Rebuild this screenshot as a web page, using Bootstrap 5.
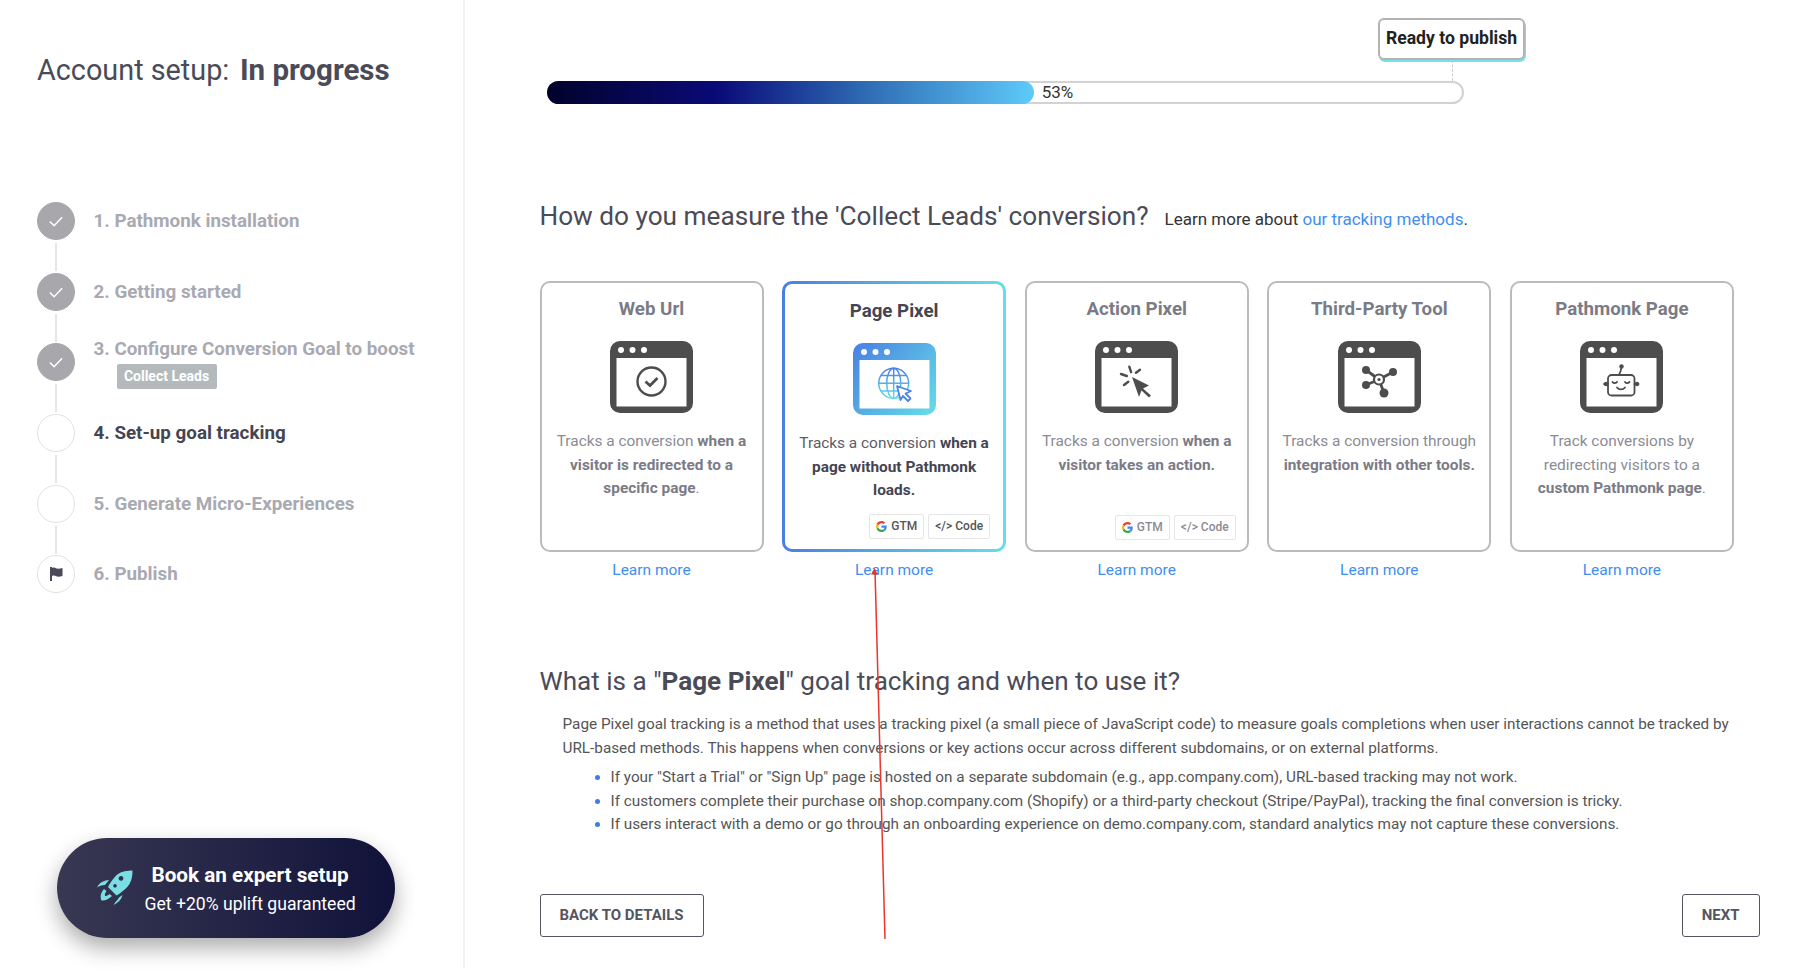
<!DOCTYPE html>
<html lang="en">
<head>
  <meta charset="UTF-8">
  <meta name="viewport" content="width=device-width, initial-scale=1.0">
  <title>Account setup</title>
  <link href="https://cdn.jsdelivr.net/npm/bootstrap@5.3.0/dist/css/bootstrap.min.css" rel="stylesheet">
  <style>
    body {
      font-family: Roboto, "Liberation Sans", sans-serif;
      background: #fff;
      color: #4b4b58;
      position: relative;
      height: 978px;
      overflow: hidden;
    }
    .side-panel {
      width: 465px;
      height: 968px;
      border-right: 2px solid #f2f2f2;
      padding: 51px 0 30px 37px;
    }
    .setup-title {
      font-size: 28.8px;
      line-height: 38px;
      font-weight: 400;
      margin: 0 0 113px;
      color: #4b4b58;
    }
    .setup-title b { font-weight: 700; font-size: 29.5px; margin-left: 3.5px; }
    .step-row { height: 38px; margin-bottom: 32.7px; position: relative; }
    .step-row:not(:last-child)::after {
      content: "";
      position: absolute;
      left: 18px;
      top: 41px;
      width: 2px;
      height: 28px;
      background: #e6e6e6;
    }
    .step-dot {
      width: 38px;
      height: 38px;
      flex: none;
      border-radius: 50%;
      border: 1px solid #e2e2e2;
      background: #fff;
    }
    .step-dot.is-done { background: #a7a7ac; border-color: #a7a7ac; }
    .step-label {
      margin-left: 18.5px;
      font-size: 18.8px;
      font-weight: 700;
      line-height: 22px;
      color: #a9a9b2;
      white-space: nowrap;
    }
    .step-label.is-tall { margin-top: -5px; }
    .step-label.is-current { color: #454552; }
    .goal-tag {
      display: block;
      width: 100px;
      margin: 4px 0 0 23px;
      background: #b4babb;
      color: #fff;
      font-size: 14px;
      line-height: 25px;
      border-radius: 2px;
      text-align: center;
    }
    .expert-btn {
      width: 338px;
      height: 100px;
      margin: 0 0 0 20px;
      border-radius: 50px;
      background: linear-gradient(90deg, #383853, #11123a);
      box-shadow: 0 10px 22px rgba(0, 0, 0, .33);
      color: #fff;
      padding-left: 40px;
    }
    .expert-btn strong { display: block; font-size: 20.7px; line-height: 26px; font-weight: 700; }
    .expert-btn span { display: block; font-size: 17.6px; line-height: 26px; margin-top: 3px; }
    .expert-copy { margin-left: 11.5px; padding-top: 3px; }

    .main-panel { padding: 18px 0 0 74.5px; width: 1355px; }
    .progress-wrap { width: 978px; margin-left: 7.5px; }
    .publish-tip {
      width: 147px;
      height: 42px;
      border: 2px solid #b3b3b3;
      border-radius: 6px;
      box-shadow: 1px 2px 0 #74e3ee;
      font-size: 17.6px;
      font-weight: 700;
      line-height: 37px;
      text-align: center;
      color: #222;
      background: #fff;
      white-space: nowrap;
    }
    .tip-line { height: 21px; margin-left: 905px; border-left: 1px dashed #ccc; }
    .bar-track {
      width: 917px;
      height: 23px;
      border: 2px solid #d2d2d2;
      border-radius: 12px;
    }
    .bar-fill {
      height: 23px;
      margin: -2px 0 0 -2px;
      border-radius: 12px;
      background: linear-gradient(90deg, #02022c 0, #0a0a78 35%, #2f6db5 66%, #5ecafa 100%);
    }
    .bar-text { font-size: 17px; color: #333; line-height: 19px; margin: -2px 0 0 8px; }

    .question-head { margin: 96px 0 0; height: 32px; }
    .question-head h2 { font-size: 26.2px; line-height: 32px; font-weight: 400; margin: 0; }
    .question-head p { font-size: 17px; margin: 0 0 0 16px; color: #333; }
    .blue-link { color: #3f8ef0; text-decoration: none; }

    .method-grid {
      display: grid;
      grid-template-columns: repeat(5, 224px);
      column-gap: 18.6px;
      margin-top: 49px;
    }
    .method-card {
      height: 271px;
      border: 2px solid #bbb;
      border-radius: 10px;
      padding: 15px 11px 10px;
      text-align: center;
      color: #8b8b94;
      background: #fff;
    }
    .method-card.is-active {
      border: 3px solid transparent;
      background: linear-gradient(#fff, #fff) padding-box, linear-gradient(90deg, #4a7fe2, #64dfe8) border-box;
      color: #5b5b66;
      padding: 16px 13px 10px;
    }
    .method-card h3 {
      font-size: 18.7px;
      line-height: 22px;
      font-weight: 700;
      margin: 0 0 21px;
      color: #7b7b86;
    }
    .method-card.is-active h3 { color: #454552; }
    .method-card svg.shot { display: block; margin: 0 auto 17px; }
    .method-card p { font-size: 15.4px; line-height: 23.7px; margin: 0 -4px; }
    .method-card b { font-weight: 700; color: #7b7b86; }
    .method-card.is-active b { color: #454552; }
    .tag-row { margin-top: auto; }
    .tool-tag {
      height: 25px;
      padding: 0 6px;
      border: 1px solid #e6e6e6;
      border-radius: 2px;
      font-size: 12px;
      font-weight: 500;
      line-height: 23px;
      white-space: nowrap;
      color: #8b8b94;
      background: #fff;
    }
    .is-active .tool-tag { color: #555; }
    .learn-row { font-size: 15.5px; line-height: 18px; margin-top: 9px; }

    .about-head { font-size: 26.1px; line-height: 30px; font-weight: 400; margin: 87px 0 0; }
    .about-head b { font-weight: 700; }
    .about-text { margin: 16px 0 0 23px; font-size: 15.3px; line-height: 24px; color: #555; width: 1175px; }
    .about-list { margin: 6px 0 0 71px; padding: 0; font-size: 15.3px; line-height: 23.5px; color: #555; }
    .about-list li::marker { color: #3f7ee0; }
    .nav-btn {
      height: 43px;
      border: 1px solid #55555f;
      border-radius: 3px;
      background: #fff;
      color: #55555f;
      font-size: 15px;
      font-weight: 700;
      padding: 0 19px;
      text-transform: uppercase;
    }
    .nav-row { margin-top: 57px; width: 1220px; }
    .red-arrow { position: absolute; left: 860px; top: 560px; pointer-events: none; }
  </style>
</head>
<body>
  <svg width="0" height="0" class="position-absolute">
    <defs>
      <linearGradient id="frameGrad" gradientUnits="userSpaceOnUse" x1="0" y1="0" x2="83" y2="72">
        <stop offset="0" stop-color="#4a7fe2"/><stop offset="1" stop-color="#64dfe8"/>
      </linearGradient>
      <linearGradient id="globeGrad" gradientUnits="userSpaceOnUse" x1="0" y1="25" x2="0" y2="56">
        <stop offset="0" stop-color="#4a7fe2"/><stop offset="1" stop-color="#64dfe8"/>
      </linearGradient>
      <symbol id="gLogo" viewBox="0 0 48 48">
        <path fill="#EA4335" d="M24 9.5c3.54 0 6.71 1.22 9.21 3.6l6.85-6.85C35.9 2.38 30.47 0 24 0 14.62 0 6.51 5.38 2.56 13.22l7.98 6.19C12.43 13.72 17.74 9.5 24 9.5z"/>
        <path fill="#4285F4" d="M46.98 24.55c0-1.57-.15-3.09-.38-4.55H24v9.02h12.94c-.58 2.96-2.26 5.48-4.78 7.18l7.73 6c4.51-4.18 7.09-10.36 7.09-17.65z"/>
        <path fill="#FBBC05" d="M10.53 28.59c-.48-1.45-.76-2.99-.76-4.59s.27-3.14.76-4.59l-7.98-6.19C.92 16.46 0 20.12 0 24c0 3.88.92 7.54 2.56 10.78l7.97-6.19z"/>
        <path fill="#34A853" d="M24 48c6.48 0 11.93-2.13 15.89-5.81l-7.73-6c-2.15 1.45-4.92 2.3-8.16 2.3-6.26 0-11.57-4.22-13.47-9.91l-7.98 6.19C6.51 42.62 14.62 48 24 48z"/>
      </symbol>
      <symbol id="stepCheck" viewBox="0 0 38 38">
        <path d="M12.5 19.5l4.5 4.5 8.5-9" fill="none" stroke="#fff" stroke-width="1.6"/>
      </symbol>
      <symbol id="winFrame" viewBox="0 0 83 72">
        <path fill="#4d4d4d" fill-rule="evenodd" d="M10 0h63a10 10 0 0 1 10 10v52a10 10 0 0 1-10 10H10A10 10 0 0 1 0 62V10A10 10 0 0 1 10 0zM6.5 17v48.5h70V17z"/>
        <circle cx="11" cy="9" r="3" fill="#fff"/><circle cx="22.5" cy="9" r="3" fill="#fff"/><circle cx="34" cy="9" r="3" fill="#fff"/>
      </symbol>
    </defs>
  </svg>

  <div class="d-flex">
    <aside class="side-panel d-flex flex-column">
      <h1 class="setup-title">Account setup: <b>In progress</b></h1>
      <div>
        <div class="step-row d-flex align-items-center">
          <div class="step-dot is-done"><svg width="36" height="36"><use href="#stepCheck"/></svg></div>
          <div class="step-label">1. Pathmonk installation</div>
        </div>
        <div class="step-row d-flex align-items-center">
          <div class="step-dot is-done"><svg width="36" height="36"><use href="#stepCheck"/></svg></div>
          <div class="step-label">2. Getting started</div>
        </div>
        <div class="step-row d-flex align-items-start">
          <div class="step-dot is-done"><svg width="36" height="36"><use href="#stepCheck"/></svg></div>
          <div class="step-label is-tall">3. Configure Conversion Goal to boost<span class="goal-tag">Collect Leads</span></div>
        </div>
        <div class="step-row d-flex align-items-center">
          <div class="step-dot"></div>
          <div class="step-label is-current">4. Set-up goal tracking</div>
        </div>
        <div class="step-row d-flex align-items-center">
          <div class="step-dot"></div>
          <div class="step-label">5. Generate Micro-Experiences</div>
        </div>
        <div class="step-row d-flex align-items-center">
          <div class="step-dot d-flex align-items-center justify-content-center">
            <svg width="13" height="14" viewBox="0 0 13 14"><path fill="#4b4b58" d="M0 0h2v14H0zM2 1c3-1.500 4 .8 6 .8 1.500 0 3-.5 4.500-.8v8c-1.500.5-3 .8-4.500.8-2 0-3-2-6-.8z"/></svg>
          </div>
          <div class="step-label">6. Publish</div>
        </div>
      </div>
      <button class="expert-btn btn d-flex align-items-center mt-auto border-0 text-start">
        <svg width="36" height="36" viewBox="0 0 36 36" fill="#7adfe5">
          <path fill-rule="evenodd" d="M35.500.5C30 .5 25 1 21 4 17 7 13 13 11 17l8.500 8.500c4.500-2.500 10.500-7.500 13-11.500C35 10 35.500 5 35.500.5zM24 6a2.400 2.400 0 1 0 .01 0zM18 14a1.800 1.800 0 1 0 .01 0z"/>
          <path d="M0 17.500C2 13 6 10.500 12 10l-4 5c-3 0-6 1-8 2.500zM16.500 35c3.500-2 7.500-4 9-10l-3.500 2.500c-1 2.500-4 4.500-5.500 7.500zM7 19c-3.500 4-4 8-2.500 11.500 3.500.5 7.500-1.500 10.500-4.500l-2.500-2c-1.500 1.500-3 2-4.500 2-.5-2 .5-3.500 1.500-5z"/>
        </svg>
        <div class="text-center expert-copy">
          <strong>Book an expert setup</strong>
          <span>Get +20% uplift guaranteed</span>
        </div>
      </button>
    </aside>

    <main class="main-panel">
      <div class="progress-wrap">
        <div class="d-flex justify-content-end"><div class="publish-tip">Ready to publish</div></div>
        <div class="tip-line"></div>
        <div class="bar-track">
          <div class="d-flex align-items-center">
            <div class="bar-fill" style="width: 53.3%"></div>
            <div class="bar-text">53%</div>
          </div>
        </div>
      </div>

      <div class="question-head d-flex align-items-baseline">
        <h2>How do you measure the 'Collect Leads' conversion?</h2>
        <p>Learn more about <a class="blue-link" href="#">our tracking methods</a>.</p>
      </div>

      <div class="method-grid">
        <div>
          <div class="method-card d-flex flex-column">
            <h3>Web Url</h3>
            <svg class="shot" width="83" height="72" viewBox="0 0 83 72">
              <use href="#winFrame"/>
              <circle cx="41.500" cy="40.500" r="14" fill="none" stroke="#4d4d4d" stroke-width="2.400"/>
              <path d="M35.500 40.500l4.500 4 7.500-7.500" fill="none" stroke="#4d4d4d" stroke-width="2.800"/>
            </svg>
            <p>Tracks a conversion <b>when a visitor is redirected to a specific page</b>.</p>
          </div>
          <div class="learn-row text-center"><a class="blue-link" href="#">Learn more</a></div>
        </div>

        <div>
          <div class="method-card is-active d-flex flex-column">
            <h3>Page Pixel</h3>
            <svg class="shot" width="83" height="72" viewBox="0 0 83 72">
              <path fill="url(#frameGrad)" fill-rule="evenodd" d="M10 0h63a10 10 0 0 1 10 10v52a10 10 0 0 1-10 10H10A10 10 0 0 1 0 62V10A10 10 0 0 1 10 0zM6.500 17v48.500h70V17z"/>
              <circle cx="11" cy="9" r="3" fill="#fff"/><circle cx="22.500" cy="9" r="3" fill="#fff"/><circle cx="34" cy="9" r="3" fill="#fff"/>
              <g fill="none" stroke="url(#globeGrad)" stroke-width="1.500">
                <circle cx="40.700" cy="40.300" r="15"/>
                <ellipse cx="40.700" cy="40.300" rx="7" ry="15"/>
                <path d="M40.700 25.300v30M25.700 40.300h30M28 32.500h25.500M28 48h25.500"/>
              </g>
              <path d="M44 43l14 5-5.500 2.500 5 5-2.500 2.500-5-5L47.500 57z" fill="#fff" stroke="#4a85e3" stroke-width="1.800" stroke-linejoin="round"/>
            </svg>
            <p>Tracks a conversion <b>when a page without Pathmonk loads.</b></p>
            <div class="tag-row d-flex justify-content-end gap-1">
              <div class="tool-tag d-flex align-items-center gap-1"><svg width="11" height="11"><use href="#gLogo"/></svg>GTM</div>
              <div class="tool-tag">&lt;/&gt; Code</div>
            </div>
          </div>
          <div class="learn-row text-center"><a class="blue-link" href="#">Learn more</a></div>
        </div>

        <div>
          <div class="method-card d-flex flex-column">
            <h3>Action Pixel</h3>
            <svg class="shot" width="83" height="72" viewBox="0 0 83 72">
              <use href="#winFrame"/>
              <path fill="#4d4d4d" d="M37 36l17 8.500-6 3 8 7-2 2-7.500-7L44 56z"/>
              <path stroke="#4d4d4d" stroke-width="2.400" stroke-linecap="round" d="M34.300 25.700l1.800 5.400M45 28.700l-4 3M26 33l5.800 2M29 44l4.300-3.300"/>
            </svg>
            <p>Tracks a conversion <b>when a visitor takes an action.</b></p>
            <div class="tag-row d-flex justify-content-end gap-1">
              <div class="tool-tag d-flex align-items-center gap-1"><svg width="11" height="11"><use href="#gLogo"/></svg>GTM</div>
              <div class="tool-tag">&lt;/&gt; Code</div>
            </div>
          </div>
          <div class="learn-row text-center"><a class="blue-link" href="#">Learn more</a></div>
        </div>

        <div>
          <div class="method-card d-flex flex-column">
            <h3>Third-Party Tool</h3>
            <svg class="shot" width="83" height="72" viewBox="0 0 83 72">
              <use href="#winFrame"/>
              <path stroke="#4d4d4d" stroke-width="2.800" d="M28 29l13 9.500M55 31l-14 7.500M28 44l13-5.500M46 52l-5-13.500"/>
              <circle cx="28" cy="29" r="4" fill="#4d4d4d"/><circle cx="55" cy="31" r="4" fill="#4d4d4d"/><circle cx="28" cy="44" r="4" fill="#4d4d4d"/><circle cx="46" cy="52" r="4.500" fill="#4d4d4d"/>
              <circle cx="41" cy="38.500" r="5" fill="#fff" stroke="#4d4d4d" stroke-width="2.200"/>
              <circle cx="41" cy="38.500" r="1.600" fill="#4d4d4d"/>
            </svg>
            <p>Tracks a conversion through <b>integration with other tools.</b></p>
          </div>
          <div class="learn-row text-center"><a class="blue-link" href="#">Learn more</a></div>
        </div>

        <div>
          <div class="method-card d-flex flex-column">
            <h3>Pathmonk Page</h3>
            <svg class="shot" width="83" height="72" viewBox="0 0 83 72">
              <use href="#winFrame"/>
              <g fill="none" stroke="#4d4d4d" stroke-width="1.800" stroke-linecap="round">
                <rect x="28" y="34" width="26.500" height="20.500" rx="3.500"/>
                <path d="M39 34c1-2 2-4 2.500-8M32.500 41c1 1.500 3 1.500 4.500 0M45 41c1 1.500 3 1.500 4.500 0M37 46.500c2 2.500 6 2.500 8 0M24 43h4M54.500 43h4"/>
              </g>
              <circle cx="41.500" cy="25.500" r="2.200" fill="#4d4d4d"/>
              <circle cx="26" cy="43" r="2.200" fill="#4d4d4d"/><circle cx="57" cy="43" r="2.200" fill="#4d4d4d"/>
            </svg>
            <p>Track conversions by redirecting visitors to a <b>custom Pathmonk page</b>.</p>
          </div>
          <div class="learn-row text-center"><a class="blue-link" href="#">Learn more</a></div>
        </div>
      </div>

      <h2 class="about-head">What is a "<b>Page Pixel</b>" goal tracking and when to use it?</h2>
      <p class="about-text">Page Pixel goal tracking is a method that uses a tracking pixel (a small piece of JavaScript code) to measure goals completions when user interactions cannot be tracked by URL-based methods. This happens when conversions or key actions occur across different subdomains, or on external platforms.</p>
      <ul class="about-list">
        <li>If your "Start a Trial" or "Sign Up" page is hosted on a separate subdomain (e.g., app.company.com), URL-based tracking may not work.</li>
        <li>If customers complete their purchase on shop.company.com (Shopify) or a third-party checkout (Stripe/PayPal), tracking the final conversion is tricky.</li>
        <li>If users interact with a demo or go through an onboarding experience on demo.company.com, standard analytics may not capture these conversions.</li>
      </ul>

      <div class="nav-row d-flex justify-content-between">
        <button class="nav-btn">Back to details</button>
        <button class="nav-btn">Next</button>
      </div>
    </main>
  </div>

  <svg class="red-arrow" width="40" height="385" viewBox="0 0 40 385">
    <path d="M15 10L25 379" stroke="#e8362c" stroke-width="1.500" fill="none"/>
    <path d="M14.500 8l-3.500 6.500h7z" fill="#e8362c"/>
  </svg>

  <script src="https://cdn.jsdelivr.net/npm/bootstrap@5.3.0/dist/js/bootstrap.bundle.min.js"></script>
</body>
</html>
